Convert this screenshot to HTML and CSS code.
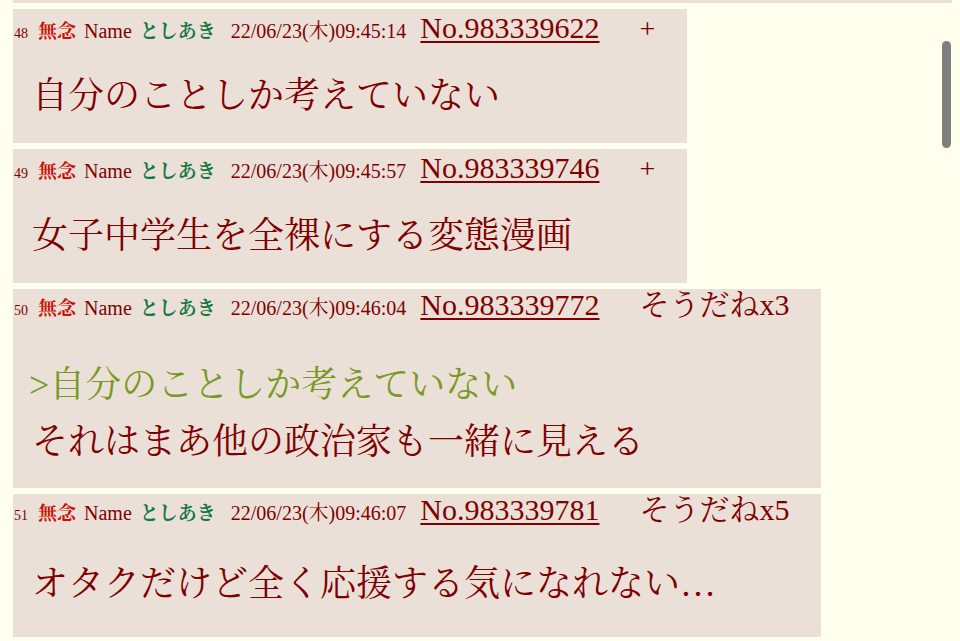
FILE: index.html
```html
<!DOCTYPE html>
<html lang="ja">
<head>
  <meta charset="UTF-8">
  <title>スレッド</title>
  <link rel="stylesheet" href="styles.css">
</head>
<body>
  <div class="thread">
    <div class="post-tail"></div>

    <div class="post post-plus">
      <div class="head">
        <span class="num">48</span>
        <span class="subject">無念</span>
        <span class="label">Name</span>
        <span class="author">としあき</span>
        <span class="date">22/06/23(木)09:45:14</span>
        <a class="no" href="#">No.983339622</a>
        <a class="del" href="#">+</a>
      </div>
      <div class="body">
        <p>自分のことしか考えていない</p>
      </div>
    </div>

    <div class="post post-plus">
      <div class="head">
        <span class="num">49</span>
        <span class="subject">無念</span>
        <span class="label">Name</span>
        <span class="author">としあき</span>
        <span class="date">22/06/23(木)09:45:57</span>
        <a class="no" href="#">No.983339746</a>
        <a class="del" href="#">+</a>
      </div>
      <div class="body">
        <p>女子中学生を全裸にする変態漫画</p>
      </div>
    </div>

    <div class="post post-wide post-quoted">
      <div class="head">
        <span class="num">50</span>
        <span class="subject">無念</span>
        <span class="label">Name</span>
        <span class="author">としあき</span>
        <span class="date">22/06/23(木)09:46:04</span>
        <a class="no" href="#">No.983339772</a>
        <a class="sodane" href="#">そうだねx3</a>
      </div>
      <div class="body">
        <p class="quote">&gt;自分のことしか考えていない</p>
        <p>それはまあ他の政治家も一緒に見える</p>
      </div>
    </div>

    <div class="post post-wide">
      <div class="head">
        <span class="num">51</span>
        <span class="subject">無念</span>
        <span class="label">Name</span>
        <span class="author">としあき</span>
        <span class="date">22/06/23(木)09:46:07</span>
        <a class="no" href="#">No.983339781</a>
        <a class="sodane" href="#">そうだねx5</a>
      </div>
      <div class="body">
        <p>オタクだけど全く応援する気になれない…</p>
      </div>
    </div>
  </div>

  <div class="scrollbar"></div>
</body>
</html>
```

FILE: styles.css
```css
* {
  box-sizing: border-box;
}

html,
body {
  height: 100%;
  overflow: hidden;
}

body {
  margin: 0;
  background: #ffffee;
  color: #800000;
  font-family: "Liberation Serif", "Noto Serif CJK JP", "Noto Sans CJK JP", serif;
}

.thread {
  padding-left: 13px;
}

.post-tail {
  width: 939px;
  height: 3px;
  margin-bottom: 6px;
  background: #ebe0d8;
}

.post {
  width: 674px;
  margin-bottom: 6px;
  padding: 2px 0 18px 1px;
  background: #ebe0d8;
}

.post-wide {
  width: 808px;
  padding-top: 0;
  padding-bottom: 24px;
}

.head {
  display: flex;
  align-items: baseline;
  height: 34px;
  line-height: 34px;
  white-space: nowrap;
}

.post-wide .head {
  height: 32px;
  line-height: 32px;
}

.num {
  font-size: 14px;
}

.subject {
  margin-left: 10px;
  font-size: 19px;
  font-weight: bold;
  color: #cc1105;
}

.label {
  margin-left: 8px;
  font-size: 20px;
}

.author {
  margin-left: 8px;
  font-size: 19px;
  font-weight: bold;
  color: #117743;
}

.date {
  margin-left: 15px;
  font-size: 20px;
}

.no {
  margin-left: 14px;
  font-size: 30px;
  color: #800000;
  text-decoration: underline;
  text-decoration-thickness: 2px;
  text-underline-offset: 3px;
}

.del {
  margin-left: 40px;
  font-size: 28px;
  color: #800000;
  text-decoration: none;
}

.sodane {
  margin-left: 40px;
  font-size: 30px;
  color: #800000;
  text-decoration: none;
}

.body {
  margin: 23px 0 0 18px;
  font-size: 36px;
  line-height: 57px;
}

.post-wide .body {
  margin-top: 30px;
}

.post-quoted {
  padding-bottom: 17px;
}

.post-quoted .body {
  margin-top: 36px;
}

.body p {
  height: 57px;
  margin: 0;
  white-space: nowrap;
}

.body .quote {
  margin-left: -3px;
  color: #789922;
}

.scrollbar {
  position: fixed;
  top: 41px;
  left: 942px;
  width: 9px;
  height: 107px;
  border-radius: 5px;
  background: #7f7f7f;
}
```
